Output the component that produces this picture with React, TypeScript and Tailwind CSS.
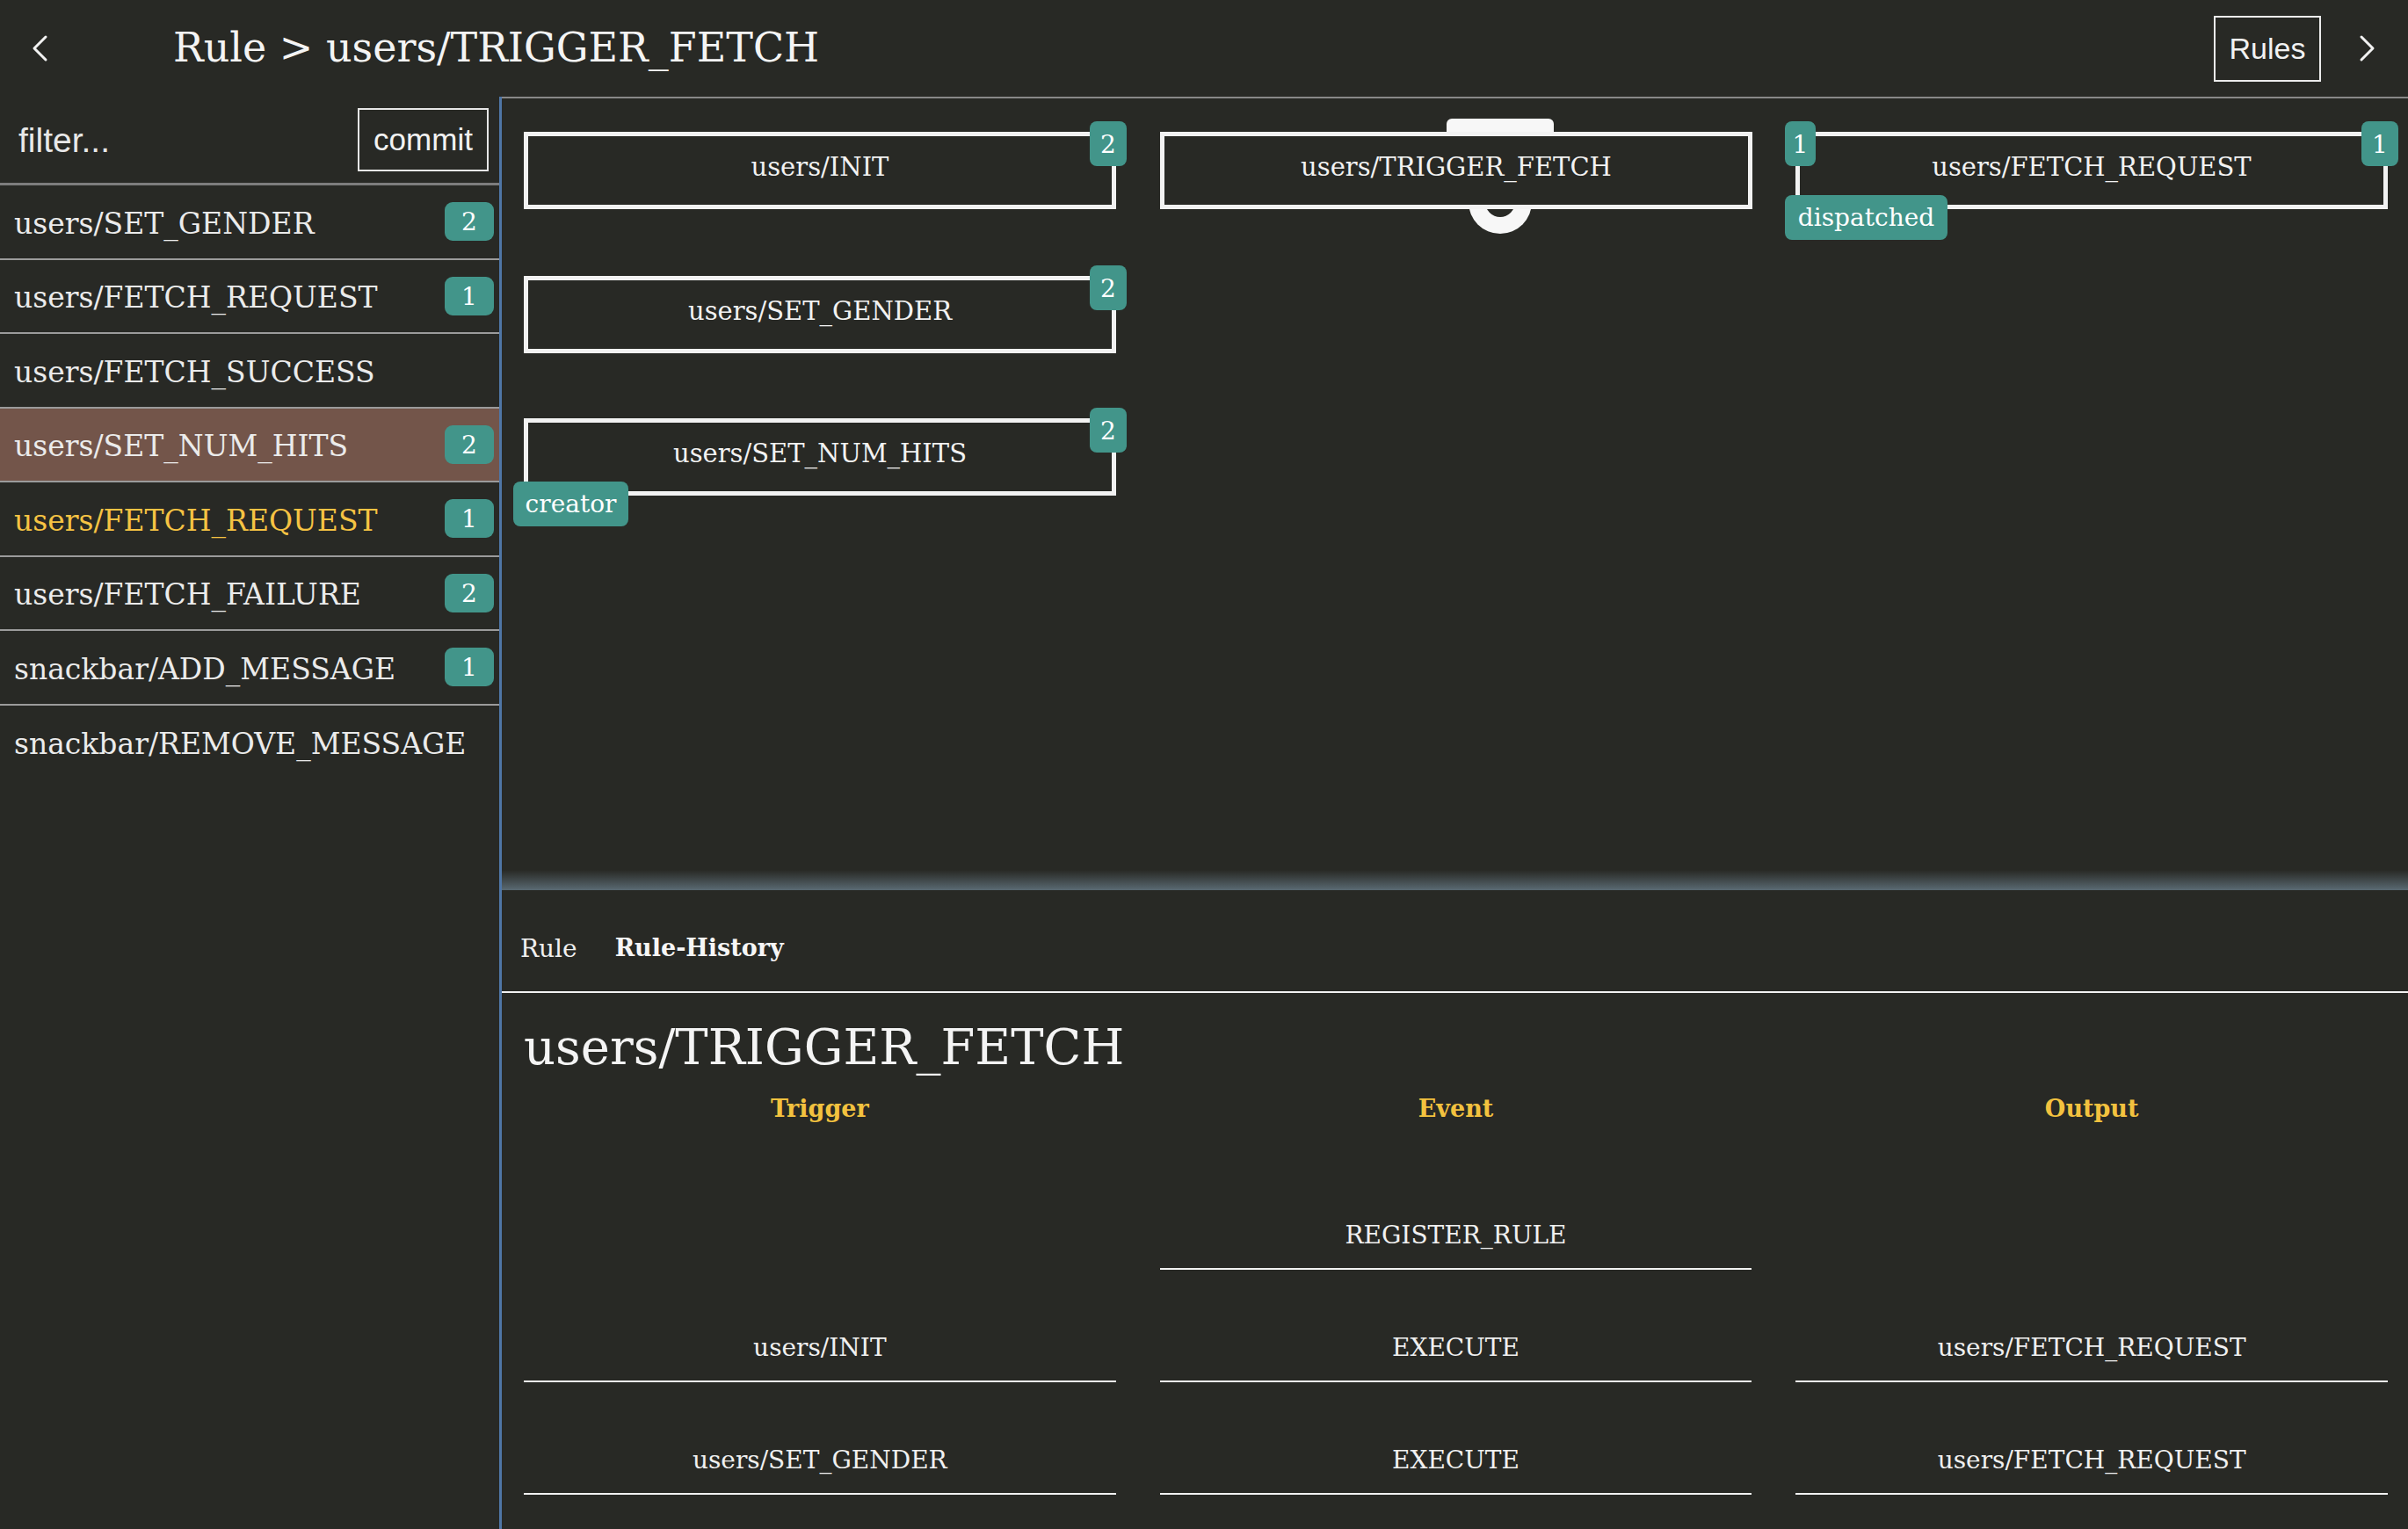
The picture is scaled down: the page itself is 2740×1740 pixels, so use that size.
import React from "react";

const slab = "font-['DejaVu_Serif',serif]";
const sans = "font-['Liberation_Sans',Arial,sans-serif]";

type Rule = { name: string; count?: number; active?: boolean; highlight?: boolean };

const rules: Rule[] = [
  { name: "users/SET_GENDER", count: 2 },
  { name: "users/FETCH_REQUEST", count: 1 },
  { name: "users/FETCH_SUCCESS" },
  { name: "users/SET_NUM_HITS", count: 2, active: true },
  { name: "users/FETCH_REQUEST", count: 1, highlight: true },
  { name: "users/FETCH_FAILURE", count: 2 },
  { name: "snackbar/ADD_MESSAGE", count: 1 },
  { name: "snackbar/REMOVE_MESSAGE" },
];

const history = [
  ["", "REGISTER_RULE", ""],
  ["users/INIT", "EXECUTE", "users/FETCH_REQUEST"],
  ["users/SET_GENDER", "EXECUTE", "users/FETCH_REQUEST"],
];

const Chevron = ({ dir }: { dir: "left" | "right" }) => (
  <svg width="20" height="32" viewBox="0 0 20 32" fill="none">
    <polyline
      points={dir === "left" ? "16,3 3,16 16,29" : "4,3 17,16 4,29"}
      stroke="#f2f2f2"
      strokeWidth="3"
      strokeLinecap="round"
      strokeLinejoin="round"
    />
  </svg>
);

const Tag = ({ children, className }: { children: React.ReactNode; className: string }) => (
  <span
    className={`absolute z-20 flex items-center justify-center rounded-lg bg-[#42958a] text-[28px] leading-none text-white ${className}`}
  >
    {children}
  </span>
);

type NodeProps = {
  label: string;
  pos: string;
  count?: string;
  inCount?: string;
  tag?: string;
  tagWidth?: string;
  handles?: boolean;
};

const Node = ({ label, pos, count, inCount, tag, tagWidth, handles }: NodeProps) => (
  <div className={`absolute h-[88px] w-[674px] ${pos}`}>
    {handles && (
      <>
        <div className="absolute left-[326px] top-[-15px] h-[40px] w-[122px] rounded-[6px] bg-[#f7f7f7]" />
        <div className="absolute left-[351px] top-[44px] flex h-[72px] w-[72px] items-center justify-center rounded-full bg-[#f7f7f7]">
          <div className="h-[34px] w-[34px] rounded-full bg-[#282925]" />
        </div>
      </>
    )}
    <div className="relative z-10 flex h-full w-full items-center justify-center border-[5px] border-[#f2f2f2] bg-[#282925] pb-[6px] text-[29px] text-[#f2f2f2]">
      {label}
    </div>
    {count && <Tag className="right-[-12px] top-[-12px] h-[51px] w-[42px] pt-[2px]">{count}</Tag>}
    {inCount && <Tag className="left-[-12px] top-[-12px] h-[51px] w-[35px] pt-[2px]">{inCount}</Tag>}
    {tag && <Tag className={`left-[-12px] top-[72px] h-[51px] ${tagWidth}`}>{tag}</Tag>}
  </div>
);

export default function App() {
  return (
    <div className={`flex h-[1740px] w-[2740px] flex-col overflow-hidden bg-[#282925] text-[#f0f0f0] ${slab}`}>
      <header className="flex h-[110px] shrink-0 items-center">
        <div className="ml-[36px] w-[161px]">
          <Chevron dir="left" />
        </div>
        <h1 className="pb-[2px] text-[46px] leading-none text-[#f4f4f4]">Rule &gt; users/TRIGGER_FETCH</h1>
        <div className="flex-1" />
        <button
          className={`flex h-[75px] w-[122px] items-center justify-center border-2 border-[#ececec] text-[34px] text-[#f2f2f2] ${sans}`}
        >
          Rules
        </button>
        <div className="ml-[42px] mr-[37px]">
          <Chevron dir="right" />
        </div>
      </header>

      <div className="flex min-h-0 flex-1">
        <aside className="flex w-[571px] shrink-0 flex-col border-r-[3px] border-[#4f76a6]">
          <div className="flex h-[101px] items-center justify-between border-b-[3px] border-[#7d7d7d] pl-[21px] pr-[12px]">
            <input
              placeholder="filter..."
              className={`w-[300px] bg-transparent pt-[2px] text-[39px] text-[#e8e8e8] outline-none placeholder:text-[#e8e8e8] ${sans}`}
            />
            <button
              className={`flex h-[72px] w-[149px] items-center justify-center border-2 border-[#e6e6e6] text-[35px] text-[#f2f2f2] ${sans}`}
            >
              commit
            </button>
          </div>
          {rules.map((r, i) => (
            <div
              key={i}
              className={`flex h-[84.5px] items-center justify-between pl-[16px] pr-[6px] text-[33px] ${
                i < rules.length - 1 ? "border-b-2 border-[#9b9b9b]" : ""
              } ${r.active ? "bg-[#73554a]" : ""} ${r.highlight ? "text-[#f6c343]" : "text-[#ebebeb]"}`}
            >
              <span className="pt-[4px]">{r.name}</span>
              {r.count && (
                <span className="flex h-[44px] w-[56px] items-center justify-center rounded-[9px] bg-[#42958a] pt-[2px] text-[28px] text-white">
                  {r.count}
                </span>
              )}
            </div>
          ))}
        </aside>

        <main className="flex min-w-0 flex-1 flex-col border-t-2 border-[#888888]">
          <div className="relative h-[878px] shrink-0">
            <Node label="users/INIT" pos="left-[25px] top-[38px]" count="2" />
            <Node label="users/SET_GENDER" pos="left-[25px] top-[202px]" count="2" />
            <Node
              label="users/SET_NUM_HITS"
              pos="left-[25px] top-[364px]"
              count="2"
              tag="creator"
              tagWidth="w-[131px]"
            />
            <Node label="users/TRIGGER_FETCH" pos="left-[749px] top-[38px]" handles />
            <Node
              label="users/FETCH_REQUEST"
              pos="left-[1472px] top-[38px]"
              count="1"
              inCount="1"
              tag="dispatched"
              tagWidth="w-[185px]"
            />
          </div>
          <div className="h-[23px] shrink-0 bg-linear-to-b from-[#282925] to-[#5a6a73]" />

          <div className="flex h-[115px] shrink-0 items-center gap-[43px] pl-[21px] pt-[18px] text-[28px]">
            <span className="text-[#f0f0f0]">Rule</span>
            <span className="text-[27px] font-bold text-[#f6f6f6]">Rule-History</span>
          </div>

          <section className="flex-1 border-t-2 border-[#f2f2f2] pl-[25px] pr-[23px] pt-[30px]">
            <h2 className="text-[56px] leading-[64px] text-[#f4f4f4]">users/TRIGGER_FETCH</h2>
            <div className="mt-[22px] grid grid-cols-3 gap-x-[50px] text-center text-[27px] font-bold leading-[32px] text-[#f3c23f]">
              <div>Trigger</div>
              <div>Event</div>
              <div>Output</div>
            </div>
            <div className="mt-[39px] grid grid-cols-3 gap-x-[50px] text-[28px] leading-[32px] text-[#f0f0f0]">
              {history.map((row, ri) =>
                row.map((cell, ci) => (
                  <div
                    key={`${ri}-${ci}`}
                    className={`flex h-[128px] items-end justify-center pb-[21px] ${
                      cell ? "border-b-2 border-[#f2f2f2]" : ""
                    }`}
                  >
                    {cell}
                  </div>
                ))
              )}
            </div>
          </section>
        </main>
      </div>
    </div>
  );
}
